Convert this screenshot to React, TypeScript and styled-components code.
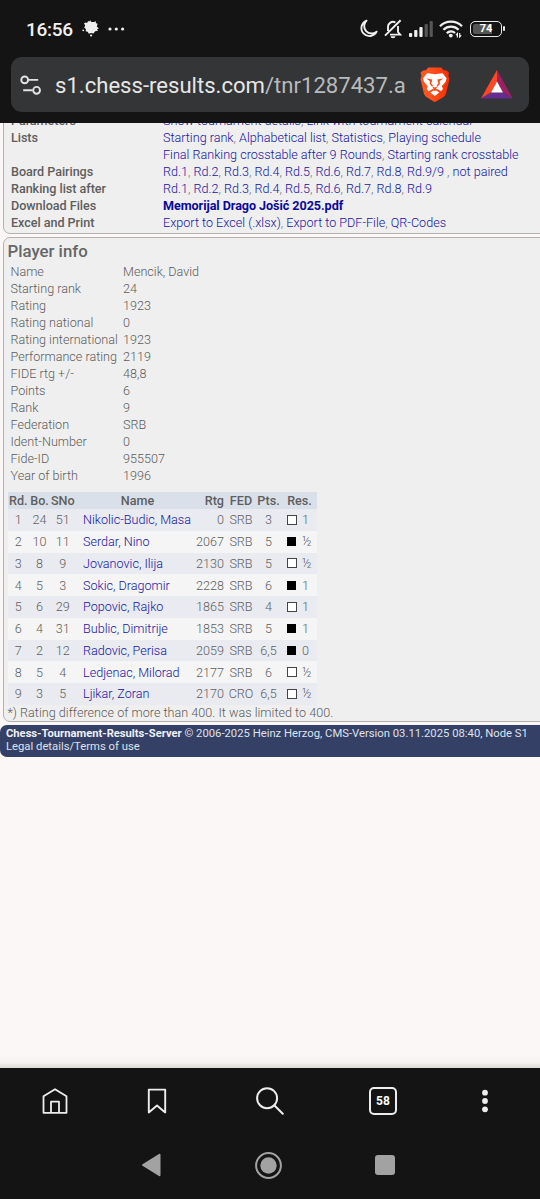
import React from "react";
import styled, { createGlobalStyle } from "styled-components";

const GlobalStyle = createGlobalStyle`
  * { box-sizing: border-box; }
  body { margin: 0; background: #141414; font-family: Roboto, "Liberation Sans", sans-serif; }
  svg { display: block; flex: none; }
`;

const Screen = styled.div`
  width: 540px;
  height: 1199px;
  display: flex;
  flex-direction: column;
  overflow: hidden;
  background: #141414;
`;

const StatusBar = styled.header`
  height: 57px;
  flex: none;
  display: flex;
  align-items: center;
  justify-content: space-between;
  padding: 0 36px 0 26px;
  color: #f0f0f0;
`;

const StatusGroup = styled.div<{ $gap: number }>`
  display: flex;
  align-items: center;
  gap: ${(p) => p.$gap}px;
`;

const Clock = styled.span`
  font-size: 19px;
  font-weight: 500;
  line-height: 22px;
  letter-spacing: -0.3px;
  padding-top: 3px;
`;

const AddressBar = styled.div`
  height: 55px;
  flex: none;
  margin: 0 11px 11px;
  padding-left: 8px;
  border-radius: 11px;
  background: #343537;
  display: flex;
  align-items: center;
`;

const Url = styled.div`
  width: 354px;
  margin: 0 10px 0 12px;
  flex: none;
  color: #e6e6e6;
  font-size: 22.1px;
  line-height: 28px;
  white-space: nowrap;
`;

const UrlPath = styled.span`
  color: #b9babb;
`;

const ShieldSlot = styled.div`
  margin-right: 30px;
`;

const Viewport = styled.main`
  height: 945px;
  flex: none;
  overflow: hidden;
  display: flex;
  flex-direction: column;
  background: linear-gradient(#fbf7f6 932px, #f5f1f0 940px, #dcd9d8 945px);
`;

const Panel = styled.section<{ $height: number }>`
  height: ${(p) => p.$height}px;
  flex: none;
  margin: 0 -10px 3px 3px;
  border: 1px solid #b5afae;
  border-radius: 7px;
  background: #efefef;
  color: #5c5c5c;
  font-size: 12.6px;
  font-weight: 300;
`;

const LinksPanel = styled(Panel)`
  margin-top: -12px;
`;

const LinkRow = styled.div`
  height: 17px;
  padding-left: 7px;
  display: grid;
  grid-template-columns: 152px 1fr;
  line-height: 17px;
  white-space: nowrap;
`;

const LinkLabel = styled.span`
  font-weight: 500;
  color: #5e5e5e;
  letter-spacing: -0.04px;
`;

const LinkList = styled.span`
  color: #777;
`;

const Link = styled.a<{ $bold?: boolean }>`
  color: ${(p) => (p.$bold ? "#0a0a98" : "#1514a2")};
  font-weight: ${(p) => (p.$bold ? 700 : 300)};
  letter-spacing: ${(p) => (p.$bold ? -0.06 : 0)}px;
`;

const PanelTitle = styled.h2`
  margin: 0;
  padding: 3px 0 0 3.5px;
  height: 25px;
  font-size: 16.8px;
  line-height: 20px;
  font-weight: 500;
  color: #666;
`;

const InfoRow = styled.div`
  height: 17px;
  line-height: 17px;
  padding-left: 6.5px;
  display: grid;
  grid-template-columns: 112.5px 1fr;
  white-space: nowrap;
`;

const Pairings = styled.div`
  width: 309px;
  margin: 8px 0 0 4px;
`;

const kinds = {
  head: { height: 17, bg: "#dae0e9" },
  odd: { height: 21.75, bg: "#e9ebf1" },
  even: { height: 21.75, bg: "#f5f5f5" },
};

const PairingRow = styled.div<{ $kind: keyof typeof kinds }>`
  display: grid;
  grid-template-columns: 20.5px 22px 24.5px 125px 27px 28px 27px 35px;
  align-items: center;
  height: ${(p) => kinds[p.$kind].height}px;
  background: ${(p) => kinds[p.$kind].bg};
  font-weight: ${(p) => (p.$kind === "head" ? 500 : 300)};
  color: ${(p) => (p.$kind === "head" ? "#5e5e5e" : "#606060")};
  white-space: nowrap;
`;

const Cell = styled.span<{ $align?: "left" | "right" | "center" }>`
  text-align: ${(p) => p.$align ?? "center"};
`;

const NameCell = styled(Cell)`
  padding-left: 8px;
`;

const RatingCell = styled(Cell)`
  padding-right: 3px;
  display: flex;
  justify-content: flex-end;
`;

const ResultCell = styled.span`
  display: flex;
  align-items: center;
  gap: 5.5px;
  padding-left: 4.5px;
`;

const PieceColor = styled.i<{ $black: boolean }>`
  width: ${(p) => (p.$black ? 9 : 10)}px;
  height: ${(p) => (p.$black ? 9 : 10)}px;
  margin-right: ${(p) => (p.$black ? 1 : 0)}px;
  border: 1px solid ${(p) => (p.$black ? "#000" : "#444")};
  background: ${(p) => (p.$black ? "#000" : "#fff")};
`;

const Footnote = styled.p`
  margin: 0 0 0 3.5px;
  line-height: 15px;
  letter-spacing: 0.015px;
  white-space: nowrap;
`;

const SiteFooter = styled.footer`
  height: 32px;
  flex: none;
  margin: -0.5px -10px 0 0;
  padding: 2px 6px;
  border-radius: 7px;
  background: #344066;
  color: #dfe2ec;
  font-size: 11.28px;
  line-height: 13px;
  white-space: nowrap;
`;

const ServerName = styled.b`
  font-size: 11.2px;
  color: #eef0f6;
`;

const Toolbar = styled.nav`
  height: 66px;
  flex: none;
  display: grid;
  grid-template-columns: 110px 94px 132px 94px 110px;
  justify-items: center;
  align-items: center;
`;

const TabCount = styled.span`
  width: 28px;
  height: 28px;
  border: 2px solid #ededed;
  border-radius: 5px;
  color: #fff;
  font-size: 12px;
  font-weight: 700;
  line-height: 24px;
  text-align: center;
`;

const SystemNav = styled.nav`
  height: 62px;
  flex: none;
  display: flex;
  justify-content: space-between;
  align-items: center;
  padding: 0 145px 0 141px;
`;

const MoonIcon = () => (
  <svg width="19" height="19" viewBox="0 0 19 19" fill="none" stroke="#f0f0f0" strokeWidth="1.9" strokeLinejoin="round">
    <path d="M7.6 1.6A8 8 0 1 0 17.6 12.6 A7.4 7.4 0 0 1 7.6 1.6Z" />
  </svg>
);

const MutedBellIcon = () => (
  <svg width="18" height="20" viewBox="0 0 18 20" fill="none" stroke="#f0f0f0" strokeWidth="1.9">
    <path d="M4 12V8A5 5 0 0 1 11.4 3.5M14 7v6l2.2 2.6H6" />
    <path d="M1 16.6 16.6 1.2" />
    <path d="M6.5 17.3h5a2.5 2 0 0 1-5 0Z" fill="#f0f0f0" stroke="none" />
  </svg>
);

const SignalIcon = () => (
  <svg width="24" height="16" viewBox="0 0 24 16">
    <g fill="#f0f0f0">
      <rect x="0" y="12" width="3.2" height="4" rx="1" />
      <rect x="5.2" y="9" width="3.2" height="7" rx="1" />
      <rect x="10.4" y="6" width="3.2" height="10" rx="1" />
    </g>
    <g fill="#565656">
      <rect x="15.6" y="3" width="3.2" height="13" rx="1" />
      <rect x="20.6" y="0" width="3.2" height="16" rx="1" />
    </g>
  </svg>
);

const WifiIcon = () => (
  <svg width="24" height="18" viewBox="0 0 24 18" fill="none" stroke="#f0f0f0" strokeWidth="2.3">
    <path d="M1 6.2A15.6 15.6 0 0 1 23 6.2M4.4 9.8a10.8 10.8 0 0 1 15.2 0M7.8 13.2a6 6 0 0 1 8.2-.2" />
    <circle cx="11.8" cy="15.6" r="1.9" fill="#f0f0f0" stroke="none" />
    <path d="M18.4 17.6v-4l-1.4 1.6M20.7 13v4l1.5-1.6" strokeWidth="1.2" />
  </svg>
);

const BatteryBox = styled.span`
  position: relative;
  width: 32px;
  height: 16px;
  margin-right: 2px;
  border: 1.5px solid #e8e8e8;
  border-radius: 5px;
  background: linear-gradient(90deg, #555 70%, #141414 70%);
  box-shadow: inset 0 0 0 2px #141414;
  color: #fff;
  font-size: 11px;
  font-weight: 700;
  line-height: 14px;
  text-align: center;
  &::after {
    content: "";
    position: absolute;
    right: -4px;
    top: 4px;
    width: 2px;
    height: 5px;
    border-radius: 1px;
    background: #e8e8e8;
  }
`;

const SplatIcon = () => (
  <svg width="17" height="17" viewBox="0 0 17 17" fill="#efefef">
    <path d="M2 3.2 3.6 2.6 5 3 6.2 1 7.2 1.6 8.2.2 9.3 2 12.4 2 13.6 1 14 3.2 15.6 3.8 14.8 6.4 16.9 8.6 15 9.2 16 10.8 13.2 11.2 11.4 13.6 9.2 13 6.9 13.8 5.6 11.8 3.6 11.2 4 9.2 2.2 7.6 3.2 5.6Z" />
    <circle cx="9.1" cy="15.5" r="1.1" />
    <circle cx="1.2" cy="10.3" r=".9" />
  </svg>
);

const MoreDotsIcon = () => (
  <svg width="17" height="4" viewBox="0 0 17 4" fill="#efefef">
    <circle cx="2" cy="2" r="1.6" /><circle cx="8.3" cy="2" r="1.6" /><circle cx="14.6" cy="2" r="1.6" />
  </svg>
);

const SiteSettingsIcon = () => (
  <svg width="24" height="22" viewBox="0 0 24 22" fill="none" stroke="#e3e3e3" strokeWidth="1.9">
    <circle cx="5.7" cy="5.9" r="3.4" />
    <path d="M9.5 5.9h9.7M4.2 16.3h9.4" />
    <circle cx="17.6" cy="16.3" r="3.4" />
  </svg>
);

const BraveIcon = () => (
  <svg width="32" height="36" viewBox="0 0 32 36">
    <defs>
      <linearGradient id="mane" x2="1">
        <stop offset=".3" stopColor="#ff5420" />
        <stop offset="1" stopColor="#f82c00" />
      </linearGradient>
    </defs>
    <path fill="url(#mane)" d="M9.3.6h12.8l2.8 2.8c2-.4 3.3.3 5.1 2.4L29.4 8.7l1.1 3.2-3.4 14.3c-.6 2-1.4 2.9-3 4L17 34.6c-.9.6-1.5.6-2.4 0l-6.8-4.4c-1.6-1.1-2.4-2-3-4L1.4 11.9l1.1-3.2-1-2.9c1.8-2.1 3.2-2.8 5.1-2.4Z" />
    <path fill="#fff" d="m15.8 7.2 3.2-.4 4.6-.5 4 5-1.1 3.6-3.6 4.2 1 2.8-1.8 2.4-3.3-1.9-3-1.6-3 1.6-3.3 1.9-1.8-2.4 1-2.8-3.6-4.2L4 11.3l4-5 4.6.5Z" />
    <path fill="#fff" d="m15.8 22.8 4.5 2.6-4.5 3.6-4.5-3.6Z" />
    <path fill="#fb451a" d="m7.2 11.5 6 .9-.9 4.1 1.8 2-1.2 1-2.2-2.8.2-2.8ZM24.4 11.5l-6 .9.9 4.1-1.8 2 1.2 1 2.2-2.8-.2-2.8ZM12.8 19.3l3 1.1 3-1.1-2.1 2.5v2h-1.8v-2Z" />
  </svg>
);

const RewardsIcon = () => (
  <svg width="32" height="29" viewBox="0 0 32 29">
    <path fill="#ff4724" d="M16 0v11.4L10 22.6 0 28.5Z" />
    <path fill="#9e1f63" d="m16 0 15.8 28.5-9.8-5.9-6-11.2Z" />
    <path fill="#662d91" d="M0 28.5 10 22.6h12l9.8 5.9Z" />
    <path fill="#fff" d="m16 11.4 6 11.2H10Z" />
  </svg>
);

const HomeIcon = () => (
  <svg width="28" height="28" viewBox="0 0 28 28" fill="none" stroke="#ededed" strokeWidth="1.8" strokeLinejoin="round">
    <path d="M14 2.2 25.5 9.3V25.8H2.5V9.3Z" />
    <path d="M10 25.5V14.7h8v10.8" />
  </svg>
);

const BookmarkIcon = () => (
  <svg width="20" height="28" viewBox="0 0 20 28" fill="none" stroke="#ededed" strokeWidth="1.9" strokeLinejoin="round">
    <path d="M1.8 2.6h16.4v22.8L10 18.6l-8.2 6.8Z" />
  </svg>
);

const SearchIcon = () => (
  <svg width="30" height="30" viewBox="0 0 30 30" fill="none" stroke="#ededed" strokeWidth="2" strokeLinecap="round">
    <circle cx="12.1" cy="12.2" r="10" />
    <path d="m19.5 19.5 8.3 8.2" />
  </svg>
);

const MenuIcon = () => (
  <svg width="8" height="24" viewBox="0 0 8 24" fill="#ededed">
    <circle cx="4" cy="3.7" r="2.9" /><circle cx="4" cy="12" r="2.9" /><circle cx="4" cy="20.3" r="2.9" />
  </svg>
);

const BackIcon = () => (
  <svg width="20" height="24" viewBox="0 0 20 24" fill="#a2a2a2" stroke="#a2a2a2" strokeWidth="2" strokeLinejoin="round">
    <path d="M18.5 1.8v20.4L2 12Z" />
  </svg>
);

const CircleIcon = () => (
  <svg width="27" height="27" viewBox="0 0 27 27">
    <circle cx="13.5" cy="13.5" r="12.4" fill="none" stroke="#a2a2a2" strokeWidth="2" />
    <circle cx="13.5" cy="13.5" r="8.2" fill="#a2a2a2" />
  </svg>
);

const SquareIcon = () => (
  <svg width="20" height="20" viewBox="0 0 20 20">
    <rect width="20" height="20" rx="3" fill="#a2a2a2" />
  </svg>
);

const rounds = ["Rd.1", "Rd.2", "Rd.3", "Rd.4", "Rd.5", "Rd.6", "Rd.7", "Rd.8"];

const linkRows: { label: string; links: string[]; bold?: boolean }[] = [
  { label: "Parameters", links: ["Show tournament details", "Link with tournament calendar"] },
  { label: "Lists", links: ["Starting rank", "Alphabetical list", "Statistics", "Playing schedule"] },
  { label: "", links: ["Final Ranking crosstable after 9 Rounds", "Starting rank crosstable"] },
  { label: "Board Pairings", links: [...rounds, "Rd.9/9 ", "not paired"] },
  { label: "Ranking list after", links: [...rounds, "Rd.9"] },
  { label: "Download Files", links: ["Memorijal Drago Jošić 2025.pdf"], bold: true },
  { label: "Excel and Print", links: ["Export to Excel (.xlsx)", "Export to PDF-File", "QR-Codes"] },
];

const playerInfo = [
  ["Name", "Mencik, David"],
  ["Starting rank", "24"],
  ["Rating", "1923"],
  ["Rating national", "0"],
  ["Rating international", "1923"],
  ["Performance rating", "2119"],
  ["FIDE rtg +/-", "48,8"],
  ["Points", "6"],
  ["Rank", "9"],
  ["Federation", "SRB"],
  ["Ident-Number", "0"],
  ["Fide-ID", "955507"],
  ["Year of birth", "1996"],
];

const games = [
  { bo: 24, no: 51, name: "Nikolic-Budic, Masa", rtg: 0, fed: "SRB", pts: "3", black: false, res: "1" },
  { bo: 10, no: 11, name: "Serdar, Nino", rtg: 2067, fed: "SRB", pts: "5", black: true, res: "½" },
  { bo: 8, no: 9, name: "Jovanovic, Ilija", rtg: 2130, fed: "SRB", pts: "5", black: false, res: "½" },
  { bo: 5, no: 3, name: "Sokic, Dragomir", rtg: 2228, fed: "SRB", pts: "6", black: true, res: "1" },
  { bo: 6, no: 29, name: "Popovic, Rajko", rtg: 1865, fed: "SRB", pts: "4", black: false, res: "1" },
  { bo: 4, no: 31, name: "Bublic, Dimitrije", rtg: 1853, fed: "SRB", pts: "5", black: true, res: "1" },
  { bo: 2, no: 12, name: "Radovic, Perisa", rtg: 2059, fed: "SRB", pts: "6,5", black: true, res: "0" },
  { bo: 5, no: 4, name: "Ledjenac, Milorad", rtg: 2177, fed: "SRB", pts: "6", black: false, res: "½" },
  { bo: 3, no: 5, name: "Ljikar, Zoran", rtg: 2170, fed: "CRO", pts: "6,5", black: false, res: "½" },
];

export default function App() {
  return (
    <Screen>
      <GlobalStyle />
      <StatusBar>
        <StatusGroup $gap={9}>
          <Clock>16:56</Clock>
          <SplatIcon />
          <MoreDotsIcon />
        </StatusGroup>
        <StatusGroup $gap={6.6}>
          <MoonIcon />
          <MutedBellIcon />
          <SignalIcon />
          <WifiIcon />
          <BatteryBox>74</BatteryBox>
        </StatusGroup>
      </StatusBar>
      <AddressBar>
        <SiteSettingsIcon />
        <Url>
          s1.chess-results.com<UrlPath>/tnr1287437.a</UrlPath>
        </Url>
        <ShieldSlot>
          <BraveIcon />
        </ShieldSlot>
        <RewardsIcon />
      </AddressBar>
      <Viewport>
        <LinksPanel $height={123}>
          {linkRows.map((row, i) => (
            <LinkRow key={i}>
              <LinkLabel>{row.label}</LinkLabel>
              <LinkList>
                {row.links.map((link, j) => (
                  <React.Fragment key={link}>
                    {j > 0 && ", "}
                    <Link $bold={row.bold}>{link}</Link>
                  </React.Fragment>
                ))}
              </LinkList>
            </LinkRow>
          ))}
        </LinksPanel>
        <Panel $height={485}>
          <PanelTitle>Player info</PanelTitle>
          {playerInfo.map(([label, value]) => (
            <InfoRow key={label}>
              <span>{label}</span>
              <span>{value}</span>
            </InfoRow>
          ))}
          <Pairings>
            <PairingRow $kind="head">
              <Cell>Rd.</Cell>
              <Cell>Bo.</Cell>
              <Cell>SNo</Cell>
              <Cell>Name</Cell>
              <RatingCell>Rtg</RatingCell>
              <Cell>FED</Cell>
              <Cell>Pts.</Cell>
              <Cell>Res.</Cell>
            </PairingRow>
            {games.map((g, i) => (
              <PairingRow key={g.name} $kind={i % 2 ? "even" : "odd"}>
                <Cell>{i + 1}</Cell>
                <Cell>{g.bo}</Cell>
                <Cell>{g.no}</Cell>
                <NameCell $align="left">
                  <Link>{g.name}</Link>
                </NameCell>
                <RatingCell>{g.rtg}</RatingCell>
                <Cell>{g.fed}</Cell>
                <Cell>{g.pts}</Cell>
                <ResultCell>
                  <PieceColor $black={g.black} />
                  {g.res}
                </ResultCell>
              </PairingRow>
            ))}
          </Pairings>
          <Footnote>*) Rating difference of more than 400. It was limited to 400.</Footnote>
        </Panel>
        <SiteFooter>
          <ServerName>Chess-Tournament-Results-Server</ServerName> © 2006-2025 Heinz Herzog, CMS-Version 03.11.2025 08:40, Node S1
          <br />
          Legal details/Terms of use
        </SiteFooter>
      </Viewport>
      <Toolbar>
        <HomeIcon />
        <BookmarkIcon />
        <SearchIcon />
        <TabCount>58</TabCount>
        <MenuIcon />
      </Toolbar>
      <SystemNav>
        <BackIcon />
        <CircleIcon />
        <SquareIcon />
      </SystemNav>
    </Screen>
  );
}
